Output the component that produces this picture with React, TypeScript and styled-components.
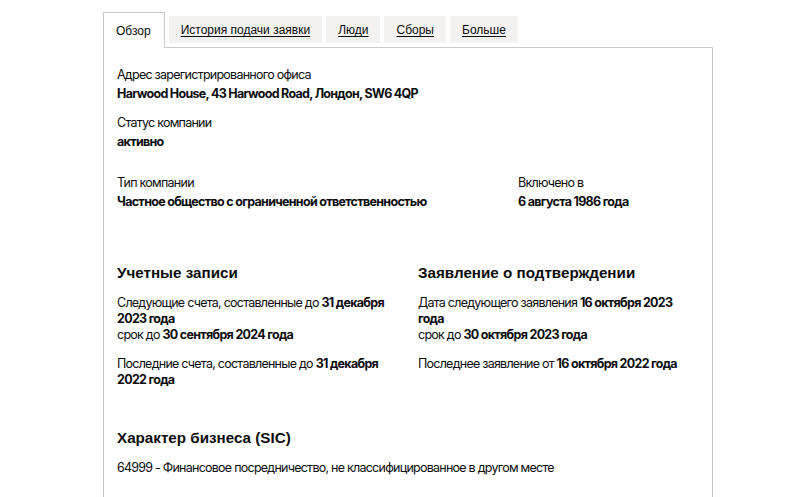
import React from 'react';
import styled, { createGlobalStyle } from 'styled-components';

const GlobalStyle = createGlobalStyle`
  html, body {
    margin: 0;
    padding: 0;
    background: #fff;
  }
  body {
    font-family: Inter, "Noto Sans", sans-serif;
    color: #0b0c0c;
  }
`;

const tabs = ['Обзор', 'История подачи заявки', 'Люди', 'Сборы', 'Больше'];

function App() {
  return (
    <>
      <GlobalStyle />
      <Page>
        <TabList>
          {tabs.map((t, i) => (
            <Tab key={t} $active={i === 0}>
              {t}
            </Tab>
          ))}
        </TabList>
        <Panel>
          <Field>
            <Label>Адрес зарегистрированного офиса</Label>
            <Value>Harwood House, 43 Harwood Road, Лондон, SW6 4QP</Value>
          </Field>
          <Field>
            <Label>Статус компании</Label>
            <Value>активно</Value>
          </Field>
          <TypeRow>
            <Field>
              <Label>Тип компании</Label>
              <Value>Частное общество с ограниченной ответственностью</Value>
            </Field>
            <Field>
              <Label>Включено в</Label>
              <Value>6 августа 1986 года</Value>
            </Field>
          </TypeRow>
          <Columns>
            <Section>
              <Heading>Учетные записи</Heading>
              <Para>
                Следующие счета, составленные до <b>31 декабря 2023 года</b>
                <br />
                срок до <b>30 сентября 2024 года</b>
              </Para>
              <Para>
                Последние счета, составленные до <b>31 декабря 2022 года</b>
              </Para>
            </Section>
            <Section>
              <Heading>Заявление о подтверждении</Heading>
              <Para>
                Дата следующего заявления <b>16 октября 2023 года</b>
                <br />
                срок до <b>30 октября 2023 года</b>
              </Para>
              <Para>
                Последнее заявление от <b>16 октября 2022 года</b>
              </Para>
            </Section>
          </Columns>
          <Section>
            <Heading>Характер бизнеса (SIC)</Heading>
            <Para>64999 - Финансовое посредничество, не классифицированное в другом месте</Para>
          </Section>
        </Panel>
      </Page>
    </>
  );
}

export default App;

const Page = styled.div`
  width: 610px;
  margin: 0 0 0 103px;
  padding-top: 12px;
`;

const TabList = styled.div`
  display: flex;
  align-items: flex-start;
  gap: 4px;
  height: 35px;
`;

const Tab = styled.div<{ $active: boolean }>`
  font-family: "Liberation Sans", Arial, sans-serif;
  font-size: 12px;
  line-height: 16px;
  color: #0b0c0c;
  cursor: pointer;
  box-sizing: border-box;
  ${(p) =>
    p.$active
      ? `
    padding: 10px 13px 10px 12px;
    background: #fff;
    border: 1px solid #c9c9c9;
    border-bottom: none;
    position: relative;
    z-index: 1;
    margin-bottom: -1px;
    height: 36px;
  `
      : `
    margin-top: 4px;
    padding: 6px 12px;
    background: #f3f2f1;
    text-decoration: underline;
    text-underline-offset: 2px;
    height: 27px;
  `}
`;

const Panel = styled.div`
  border: 1px solid #c9c9c9;
  border-bottom: none;
  padding: 19px 14px 40px 13px;
  min-height: 460px;
  box-sizing: border-box;
`;

const Field = styled.div`
  margin-bottom: 13px;
`;

const Label = styled.div`
  font-size: 12.5px;
  line-height: 16px;
  letter-spacing: -0.75px;
  margin-bottom: 3px;
`;

const Value = styled.div`
  font-size: 12.5px;
  line-height: 16px;
  font-weight: 700;
  letter-spacing: -0.7px;
`;

const TypeRow = styled.div`
  display: grid;
  grid-template-columns: 401px 1fr;
  margin-top: 25px;
  margin-bottom: 40px;
`;

const Columns = styled.div`
  display: grid;
  grid-template-columns: 301px 1fr;
  margin-bottom: 27px;
`;

const Section = styled.div`
  padding-right: 12px;
`;

const Heading = styled.h2`
  font-family: "Liberation Sans", Arial, sans-serif;
  font-size: 15.2px;
  line-height: 20px;
  font-weight: 700;
  margin: 0 0 12px;
`;

const Para = styled.p`
  font-size: 12.5px;
  line-height: 16px;
  letter-spacing: -0.75px;
  margin: 0 0 13px;
  b {
    letter-spacing: -0.7px;
  }
`;
